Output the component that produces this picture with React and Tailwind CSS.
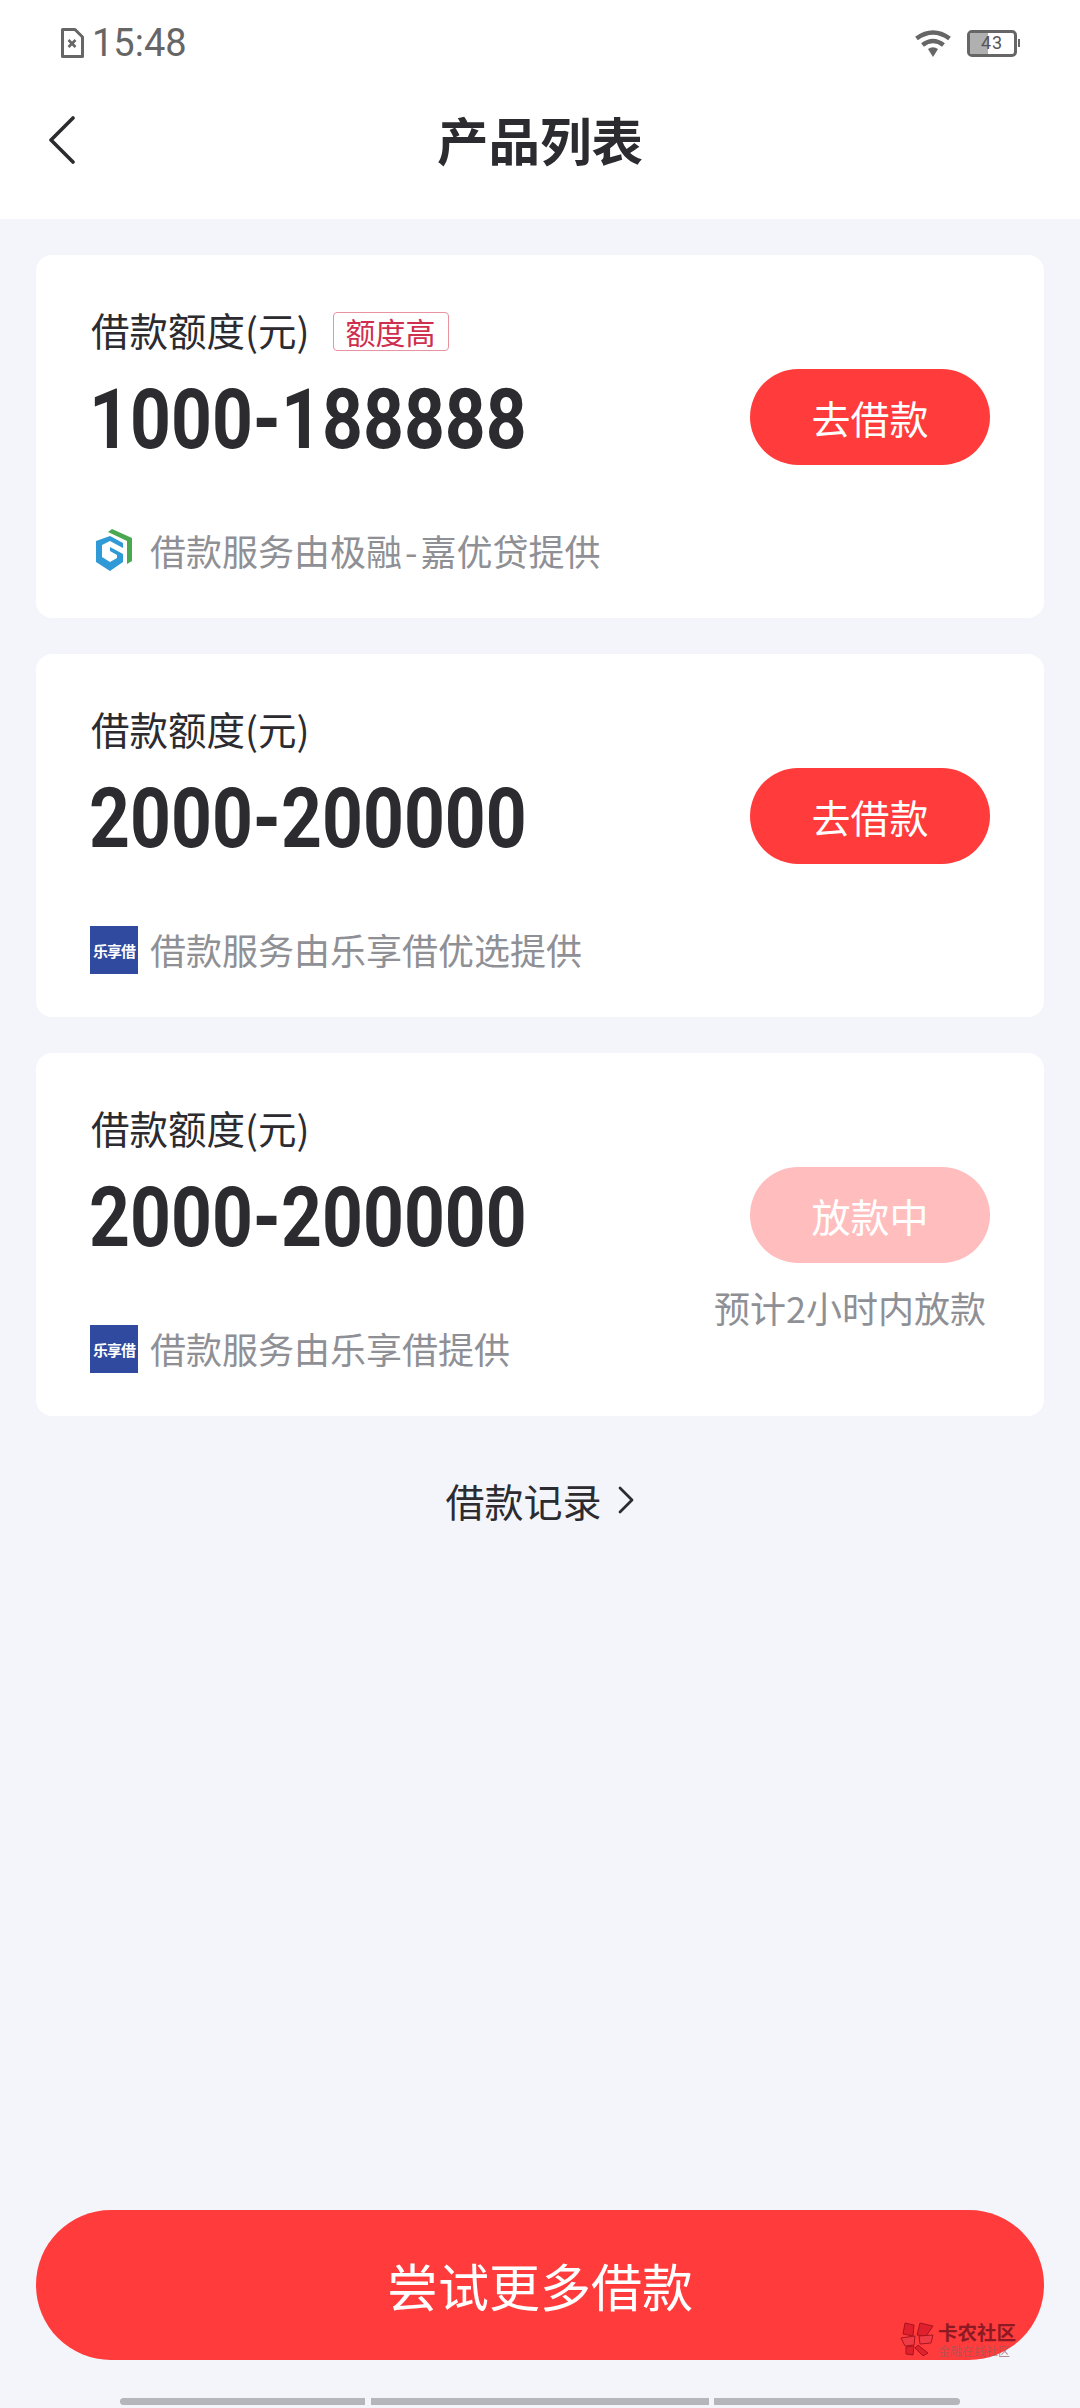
const sans = "font-['Noto_Sans_CJK_SC','Noto_Sans',sans-serif]";

function GLogo() {
  return (
    <svg width="36" height="42" viewBox="0 0 36 42" className="ml-[4px] mr-[18px] shrink-0">
      <path d="M16 0 L36 9 L36 32 L31 35 L31 12 L12 3 Z" fill="#4aa851" />
      <path d="M14 7 L27 14 L27 19 L14 12 L6 16 L6 28 L14 33 L21 29 L21 26 L14 22 L14 18 L27 25 L27 33 L14 42 L0 33 L0 12 Z" fill="#2f9ad6" />
    </svg>
  );
}

function LeLogo() {
  return (
    <div className="-ml-[2px] mr-[12px] mt-[2px] w-[48px] h-[48px] shrink-0 bg-[#2f4a9e] flex items-center justify-center overflow-hidden">
      <span className={`${sans} text-[15px] leading-none font-bold text-white whitespace-nowrap tracking-[-1px]`}>乐享借</span>
    </div>
  );
}

function Card({ range, tag, logo, provider, disabled, caption, button }) {
  return (
    <div className="h-[363px] rounded-[16px] bg-white flex justify-between pl-[56px] pr-[54px]">
      <div className="pt-[52px]">
        <div className="flex items-center h-[50px]">
          <span className="mb-[6px] text-[38.5px] leading-[50px] text-[#2b2b30] whitespace-nowrap -ml-[1px]">借款额度(元)</span>
          {tag && (
            <span className="ml-[23px] mb-[2px] h-[39px] w-[116px] flex items-center justify-center rounded-[4px] border border-[#e8939f] text-[30px] leading-none text-[#cf2f4e]">
              {tag}
            </span>
          )}
        </div>
        <div className="-ml-[3px] mt-[21px] h-[84px] origin-left scale-x-[0.85] font-['Roboto',sans-serif] font-bold text-[84px] leading-[84px] text-[#2b2b30] whitespace-nowrap">
          {range}
        </div>
        <div className="mt-[63px] flex items-center h-[50px]">
          {logo === "g" ? <GLogo /> : <LeLogo />}
          <span className="text-[36px] leading-[50px] text-[#8f9095] whitespace-nowrap">{provider}</span>
        </div>
      </div>
      <div className="pt-[114px] flex flex-col items-end">
        <button className={`w-[240px] h-[96px] rounded-full text-[39px] leading-none text-white ${disabled ? "bg-[#ffbdbd]" : "bg-[#ff3b3b]"}`}>
          {button}
        </button>
        {caption && (
          <div className="mt-[19px] pr-[4px] text-[36px] leading-[50px] text-[#8f9095] whitespace-nowrap">{caption}</div>
        )}
      </div>
    </div>
  );
}

export default function App() {
  return (
    <div className={`${sans} w-[1080px] h-[2408px] bg-[#f4f5fa] flex flex-col overflow-hidden`}>
      <header className="bg-white h-[219px] shrink-0">
        <div className="h-[84px] flex items-center justify-between pl-[60px] pr-[60px] pt-[2px]">
          <div className="flex items-center gap-[8px]">
            <svg width="24" height="30" viewBox="0 0 24 30" fill="none" stroke="#666" strokeWidth="3">
              <path d="M2.5 1.5 H15 L22.5 9 V28.5 H2.5 Z" strokeLinejoin="round" />
              <path d="M8.5 12 L15.5 19 M15.5 12 L8.5 19" strokeWidth="2.6" />
            </svg>
            <span className="font-['Roboto',sans-serif] text-[38px] leading-none text-[#666]">15:48</span>
          </div>
          <div className="flex items-center gap-[16px]">
            <svg width="36" height="27" viewBox="0 0 36 27" fill="none" stroke="#666" strokeWidth="4.5">
              <path d="M1.5 8.5 Q18 -3.5 34.5 8.5" />
              <path d="M7.5 15 Q18 7 28.5 15" />
              <path d="M13 19 L18 27 L23 19 Q18 15.5 13 19 Z" fill="#666" stroke="none" />
            </svg>
            <div className="flex items-center">
              <div className="relative w-[50px] h-[27px] rounded-[5px] border-[3px] border-[#666] flex items-center overflow-hidden">
                <div className="w-[18px] h-full bg-[#b0b0b0]" />
                <span className="absolute inset-0 flex items-center justify-center font-['Roboto',sans-serif] text-[18px] leading-none tracking-[1px] text-[#555]">43</span>
              </div>
              <div className="ml-[1px] w-[2px] h-[8px] bg-[#666]" />
            </div>
          </div>
        </div>
        <div className="relative h-[112px] pb-[3px] flex items-center justify-center">
          <svg width="28" height="48" viewBox="0 0 28 48" fill="none" stroke="#2b2b30" strokeWidth="3.6" strokeLinecap="round" strokeLinejoin="round" className="absolute left-[48px] top-[32px]">
            <path d="M25 2 L3 24 L25 46" />
          </svg>
          <h1 className="text-[51.5px] leading-none font-bold text-[#2b2b30]">产品列表</h1>
        </div>
      </header>

      <main className="flex-1 px-[36px] pt-[36px]">
        <div className="flex flex-col gap-[36px]">
          <Card range="1000-188888" tag="额度高" logo="g" provider={<>借款服务由极融<span className="mx-[3px]">-</span>嘉优贷提供</>} button="去借款" />
          <Card range="2000-200000" logo="le" provider="借款服务由乐享借优选提供" button="去借款" />
          <Card range="2000-200000" logo="le" provider="借款服务由乐享借提供" button="放款中" disabled caption="预计2小时内放款" />
        </div>
        <div className="mt-[59px] flex items-center justify-center gap-[15px] h-[50px]">
          <span className="text-[39px] leading-[50px] text-[#2b2b30]">借款记录</span>
          <svg width="18" height="28" viewBox="0 0 18 28" fill="none" stroke="#2b2b30" strokeWidth="2.8" strokeLinecap="round" strokeLinejoin="round">
            <path d="M3 2 L15 14 L3 26" />
          </svg>
        </div>
      </main>

      <div className="relative mx-[36px] h-[150px] shrink-0">
        <button className="w-full h-full rounded-full bg-[#ff3b3b] text-[51px] leading-none text-white">尝试更多借款</button>
        <div className="absolute left-[864px] top-[112px] flex items-start gap-[4px] pointer-events-none">
          <svg width="34" height="34" viewBox="0 0 34 34" fill="#e0202c" stroke="#a8141f" strokeWidth="1">
            <path d="M5 1 L14 3 L13 14 L3 12 Z" />
            <path d="M20 1 L33 4 L26 14 L17 13 Z" />
            <path d="M1 16 L15 14 L14 23 L5 24 Z" fill="#ef3b45" />
            <path d="M19 14 L33 13 L31 21 L20 22 Z" fill="#ef3b45" />
            <path d="M6 25 L14 24 L13 33 L6 32 Z" />
            <path d="M18 23 L28 31 L23 34 L15 26 Z" />
          </svg>
          <div className="flex flex-col w-[80px]">
            <span className="text-[19.5px] leading-[20px] font-bold text-[#8c1a24] whitespace-nowrap">卡农社区</span>
            <span className="mt-[3px] text-[12px] leading-[12px] text-[#9a5a5e]/70 whitespace-nowrap">金融在线社区</span>
          </div>
        </div>
      </div>

      <div className="h-[48px] shrink-0 pt-[38px] pl-[120px] flex items-start gap-[6px]">
        <div className="w-[245px] h-[7px] rounded-l-full bg-[#b5b6bb]" />
        <div className="w-[338px] h-[7px] bg-[#b5b6bb]" />
        <div className="w-[246px] h-[7px] ml-[-1px] rounded-r-full bg-[#b5b6bb]" />
      </div>
    </div>
  );
}
